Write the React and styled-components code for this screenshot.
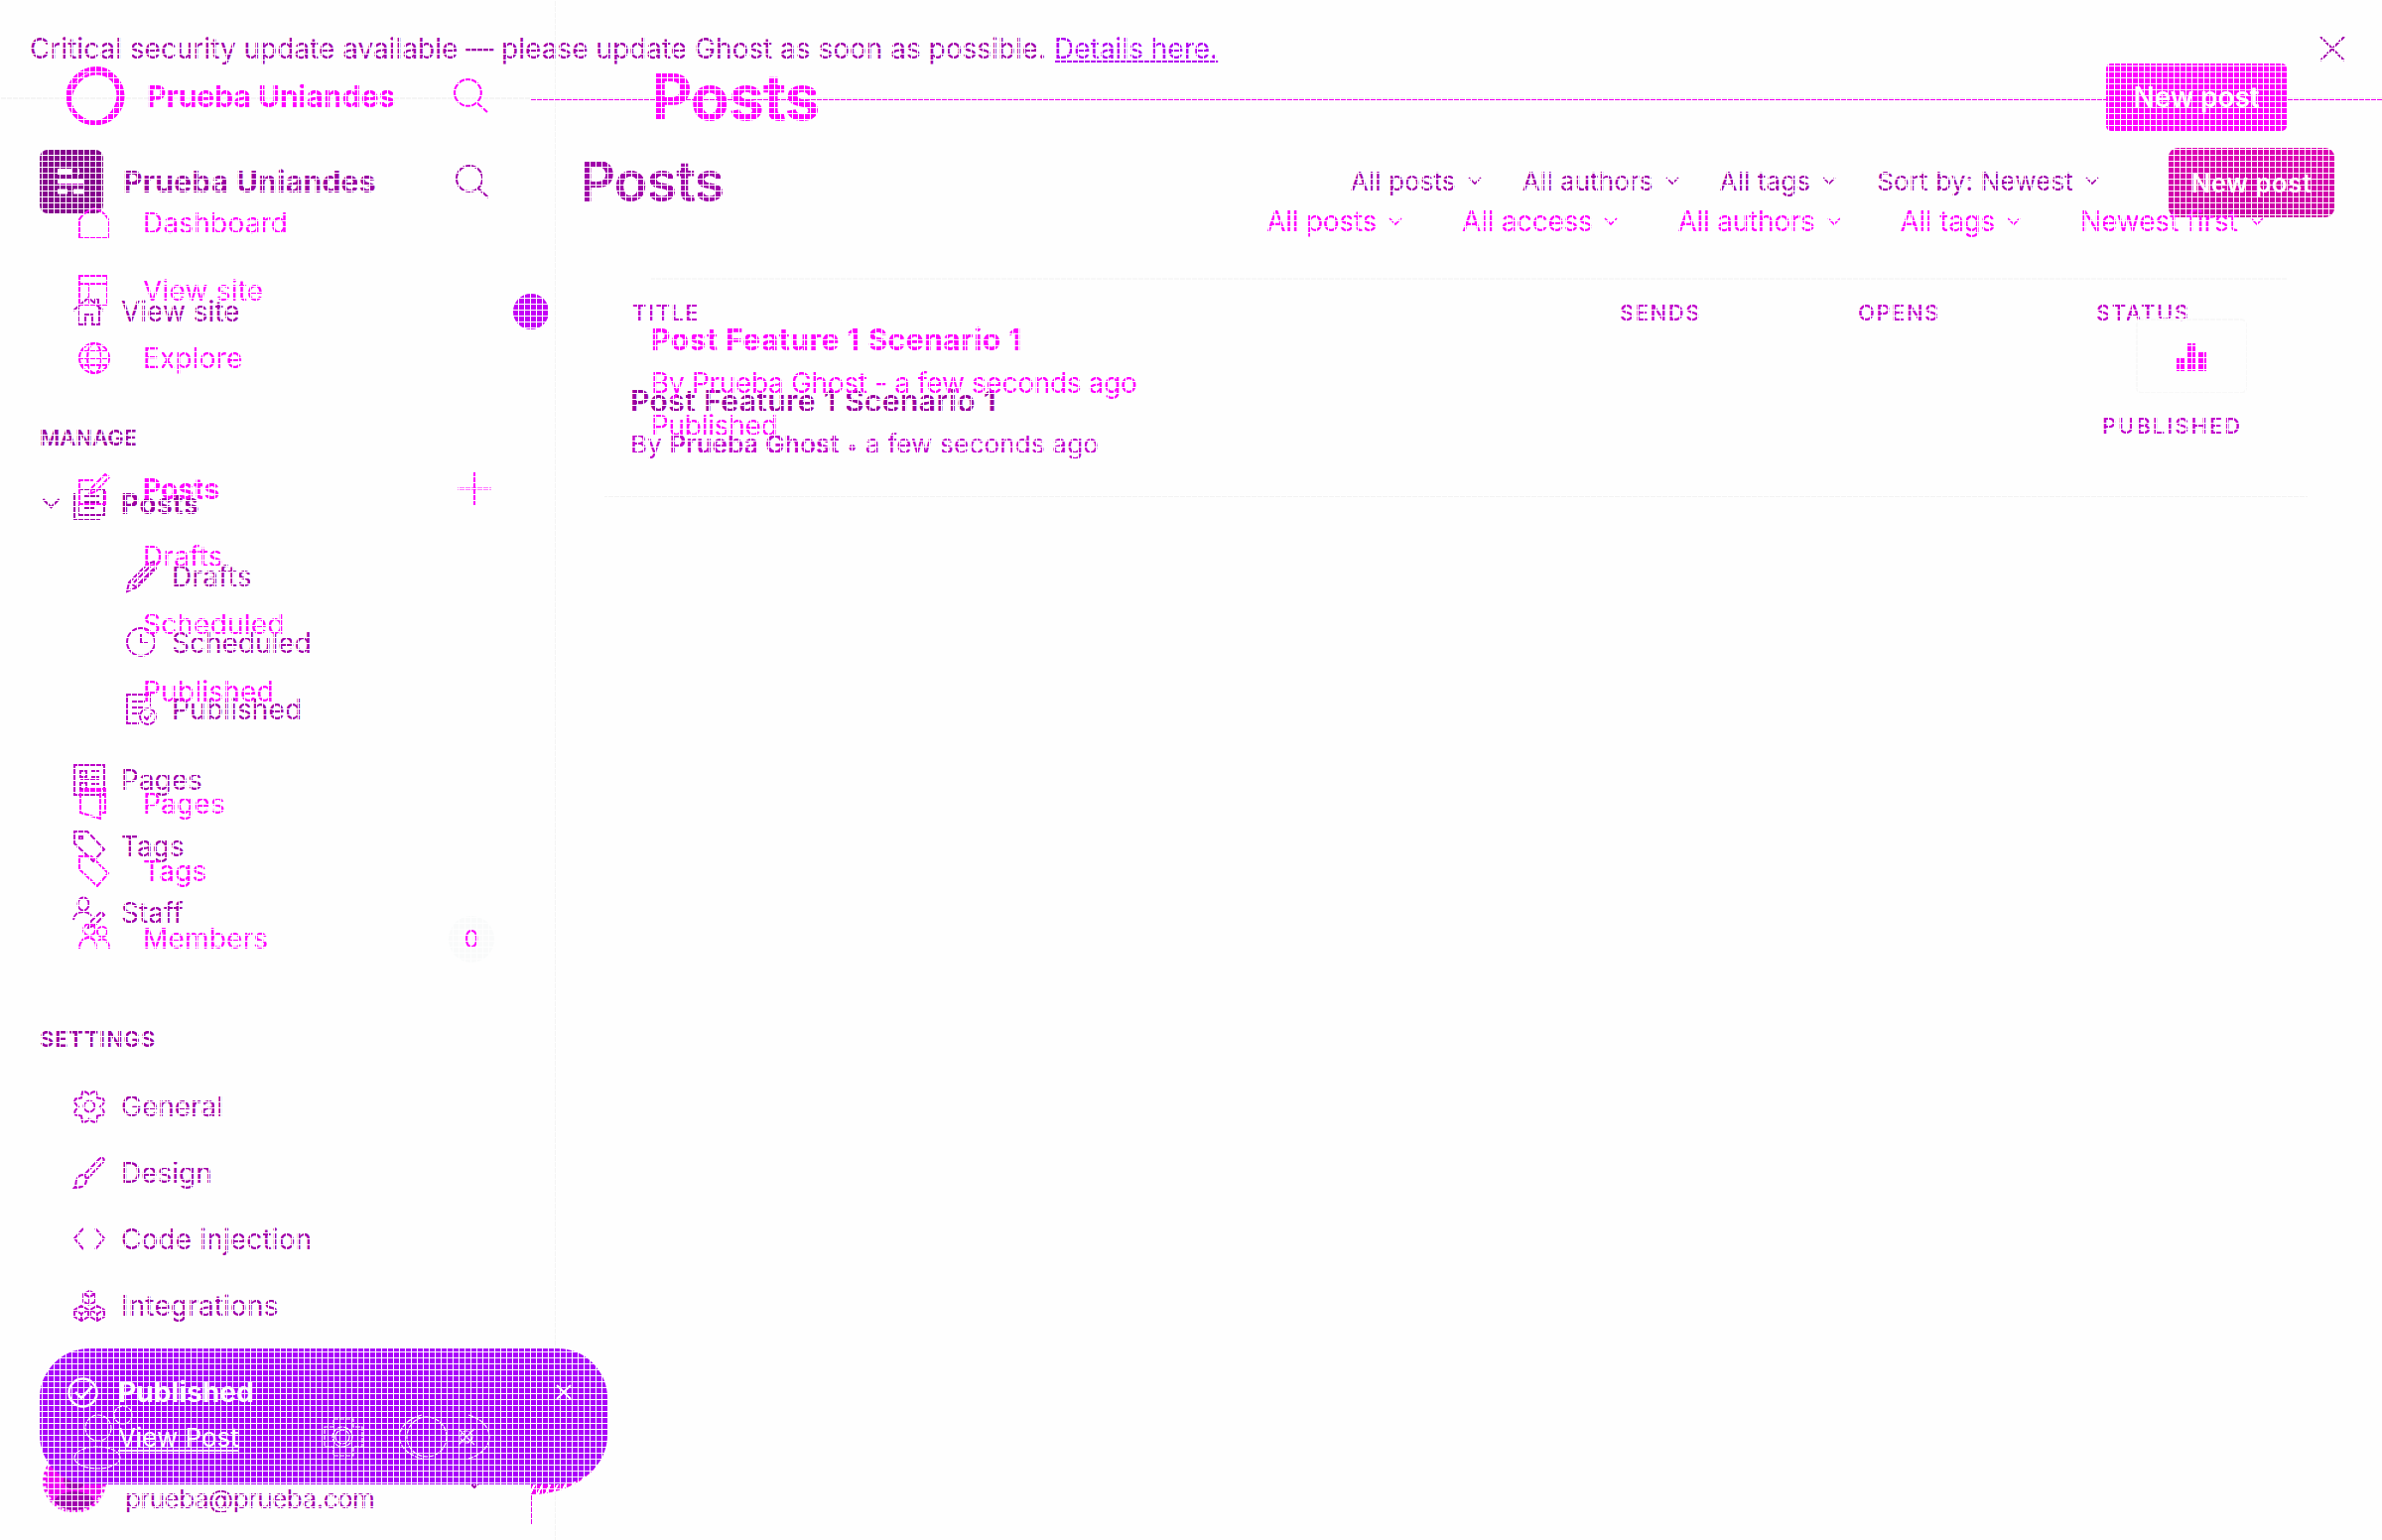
import React from "react";
import styled, { createGlobalStyle } from "styled-components";

const MAGENTA = "#ff00ff";
const PURPLE = "#a000aa";
const DEEP = "#9a00a2";
const ORCHID = "#c000cc";

const Global = createGlobalStyle`
  *{box-sizing:border-box}
  body{margin:0;background:#fefefe;font-family:Inter,"Liberation Sans",sans-serif}
  h1,h2,h3,p{margin:0}
`;

const Page = styled.div`
  display:grid;
  grid-template:1552px / 2400px;
  width:2400px;height:1552px;
  overflow:hidden;
  white-space:nowrap;
`;
const Layer = styled.div`
  grid-area:1 / 1;
  display:flex;
  flex-direction:${p => (p.$column ? "column" : "row")};
  min-width:0;min-height:0;
  color:${p => p.$color};
`;
const GridMask = styled.div`
  grid-area:1 / 1;
  z-index:5;
  pointer-events:none;
  background-image:linear-gradient(to right,#fefefe 1px,transparent 1px),linear-gradient(#fefefe 1px,transparent 1px);
  background-size:6px 6px;
`;
const Text = styled.span`
  font-size:${p => p.$size || 28}px;
  font-weight:${p => p.$weight || 400};
  letter-spacing:${p => p.$track || 0}px;
  line-height:${p => p.$line || 34}px;
  color:${p => p.$color || "inherit"};
`;
const Svg = styled.svg`
  display:block;flex:none;overflow:visible;
  width:${p => p.$w || 32}px;height:${p => p.$h || p.$w || 32}px;
  fill:none;stroke:currentColor;stroke-width:${p => p.$stroke || 2};
`;

/* Banner */
const Banner = styled.header`
  display:flex;align-items:center;justify-content:space-between;
  height:100px;flex:none;padding:0 38px 0 30px;
  border-bottom:2px solid #f5f5f5;
`;
const DetailsLink = styled.a`
  color:#b000f0;text-decoration:underline;text-decoration-thickness:2px;text-underline-offset:2px;
`;
const Body = styled.div`display:flex;flex:1;min-height:0;`;

/* Sidebar */
const SideNav = styled.nav`
  width:560px;flex:none;display:flex;flex-direction:column;
`;
const SideEdge = styled.div`
  grid-area:1 / 1;width:560px;border-right:1px solid #f4f4f4;
`;
const Brand = styled.div`
  display:flex;align-items:center;
  height:${p => p.$h}px;flex:none;
  padding:${p => p.$pad};
  margin-bottom:${p => p.$after || 0}px;
  gap:${p => p.$gap}px;
  > svg:last-child{margin-left:auto}
`;
const LogoTile = styled.div`
  width:64px;height:64px;border-radius:8px;background:#86008e;flex:none;
  display:grid;place-items:center;
`;
const SectionTitle = styled.h3`
  display:flex;align-items:center;
  height:${p => p.$h}px;margin-top:${p => p.$top}px;padding-left:40px;flex:none;
  font-size:22px;font-weight:600;letter-spacing:${p => p.$track}px;color:${DEEP};
`;
const NavRow = styled.div`
  display:flex;align-items:center;
  height:${p => p.$h || 67}px;flex:none;
  margin-top:${p => p.$top || 0}px;
  padding-left:${p => p.$left}px;
  padding-right:${p => p.$right || 0}px;
`;
const IconSlot = styled.span`
  width:${p => p.$w}px;flex:none;color:${p => p.$color || "inherit"};
`;
const RowEnd = styled.span`margin-left:auto;display:flex;`;
const Dot = styled.span`
  width:36px;height:36px;border-radius:50%;background:#c400f6;
`;
const CountBadge = styled.span`
  width:46px;height:47px;border-radius:50%;background:#f9fafa;
  display:grid;place-items:center;font-size:24px;
`;
const UserRow = styled.div`
  display:flex;align-items:flex-end;height:64px;margin-top:112px;padding:0 76px 0 43px;gap:19px;flex:none;
`;
const Email = styled.span`
  font-size:26px;letter-spacing:-.5px;line-height:30px;margin-bottom:-1px;
`;
const Avatar = styled.div`
  width:64px;height:64px;flex:none;border-radius:50%;overflow:hidden;
  background:#f000f4;border:3px dotted #f3e8f3;color:#a000ae;
`;
const UserChevron = styled(Svg)`margin:0 0 25px auto;`;

/* Main area */
const Main = styled.main`flex:1;display:flex;flex-direction:column;min-width:0;`;
const Toolbar = styled.div`
  display:flex;align-items:center;flex:none;
  height:${p => p.$h}px;padding:${p => p.$pad};
`;
const PageTitle = styled.h1`
  font-size:${p => p.$size}px;font-weight:${p => p.$weight};letter-spacing:-1.1px;line-height:1;
  margin-right:auto;
`;
const Filters = styled.div`display:flex;align-items:center;gap:${p => p.$gap}px;`;
const FilterItem = styled.div`display:flex;align-items:center;gap:13px;`;
const NewPost = styled.button`
  border:0;font-family:inherit;color:#fefefe;padding:0;flex:none;
  width:${p => p.$w}px;height:${p => p.$h}px;border-radius:${p => p.$radius}px;
  margin:${p => p.$margin || 0};
  background:${p => p.$bg};
  font-size:${p => p.$size}px;font-weight:${p => p.$weight};letter-spacing:${p => p.$track || 0}px;
`;
const Table = styled.section`width:1716px;margin-left:49px;`;
const TableRow = styled.div`
  display:grid;grid-template-columns:1000px 240px 240px 236px;align-items:center;
  height:${p => p.$h}px;
  padding-bottom:${p => p.$bottom || 0}px;
  border-bottom:${p => (p.$ruled ? "1px solid #f2f2f2" : "0")};
  color:${ORCHID};
`;
const Cell = styled.div`
  display:flex;flex-direction:column;
  padding-left:${p => p.$left}px;padding-bottom:${p => p.$bottom || 0}px;
`;
const FilterBar = styled.div`
  display:flex;justify-content:flex-end;align-items:center;flex:none;
  height:86px;padding:0 24px 30px 0;border-bottom:2px solid #f7f7f7;
`;
const PostEntry = styled.article`
  display:flex;justify-content:space-between;padding:38px 40px 0 0;
`;
const EntryText = styled.div`display:flex;flex-direction:column;padding-top:1px;`;
const StatsBox = styled.div`
  width:112px;height:76px;margin-top:1px;border:2px solid #f8f8f8;border-radius:6px;
  display:grid;place-items:center;
`;
const Content = styled(Main)`padding:0 96px;`;

/* Frame outline behind the layers */
const FrameTop = styled.div`
  grid-area:1 / 1;height:1px;background:#f400f4;margin:100px 0 0 535px;
`;
const FrameSide = styled.div`
  grid-area:1 / 1;width:1px;height:29px;background:#e000e8;margin:1507px 0 0 535px;
`;

/* Toast */
const ToastShadow = styled.div`
  grid-area:1 / 1;z-index:2;margin:1440px 0 0 535px;width:76px;height:66px;
  border-radius:0 0 76px 0 / 0 0 56px 0;
  background:repeating-linear-gradient(115deg,#f000f0 0 5px,#fefefe 5px 7px);
`;
const Toast = styled.aside`
  grid-area:1 / 1;z-index:3;margin:1359px 0 0 40px;
  width:572px;height:137px;border-radius:50px;
  background:#aa00fa;color:#fefefe;
  display:grid;grid-template:137px / 572px;
`;
const ToastBody = styled.div`
  grid-area:1 / 1;display:grid;grid-template-columns:51px 1fr 18px;
  grid-template-rows:34px 32px;row-gap:13px;align-content:start;align-items:center;
  padding:27px 34px 0 28px;
`;
const ViewPost = styled.a`
  grid-column:2;justify-self:start;font-size:26px;line-height:32px;
  text-decoration:underline;text-decoration-thickness:2px;text-underline-offset:3px;
`;
const Ghosted = styled(Svg)`grid-area:1 / 1;`;

const paths = {
  home: <path d="M0 15 15 2l15 13M5 12v17h7V19h7v10h7V12M22 8V3h3v8" />,
  posts: <path d="M5 1h26v26H5zM10 8h16M10 14h16M10 20h11M1 5v26h26" />,
  pencil: <path d="M1 31l2-9L22 3l6-2 2 7-19 19zM3 22l8 5M8 22 25 5M11 25 28 8" />,
  clock: <><circle cx="15" cy="15" r="14" /><path d="M15 7v9h7" /></>,
  published: <><path d="M13 30H1V1h23v12M5 8h14M5 14h12M5 20h8" /><circle cx="22" cy="23" r="8" /><path d="m18 23 3 3 5-6" /></>,
  pages: <path d="M1 1h30v30H1zM7 7h6v6H7zM7 19h6v6H7zM18 7h8M18 13h8M7 16h19M18 20h8M18 25h8" />,
  tag: <><path d="M1 1h13l17 18-11 12L1 13z" /><path d="M6 6h3v3H6z" /></>,
  staff: <><ellipse cx="10" cy="7" rx="5.500" ry="6.500" /><path d="M0 23c1-6 4-8 10-8 4 0 6 1 8 4M15 31l3-7 10-9 3 3-9 10z" /></>,
  gear: <><circle cx="16" cy="16" r="5.500" /><path d="M16 4.500c2-3 4-4 7-3l1 6 6 1c2 3 0 5-3 8 3 3 5 5 3 8l-6 1-1 6c-3 1-5 0-7-3-2 3-4 4-7 3l-1-6-6-1c-2-3 0-5 3-8-3-3-5-5-3-8l6-1 1-6c3-1 5 0 7 3z" /></>,
  brush: <path d="M1 31c3-3 0-6 3-10 4-5 9-3 9 2 0 6-6 8-12 8zM10 19 26 2c3-3 6 0 4 3L14 22" />,
  code: <path d="M10 5 1 15l9 11M22 5l9 10-9 11" />,
  cubes: <path d="M16 1l6 3v8l-6 3-6-3V4zM10 4l6 3 6-3M16 7v8M8 16l7 4v7l-7 4-7-4v-7zM1 20l7 4 7-4M8 24v7M24 16l7 4v7l-7 4-7-4v-7zM17 20l7 4 7-4M24 24v7" />,
  dash: <path d="M1 31V12C4 7 11 2 16 1c5 1 12 6 14 11v19z" />,
  layout: <path d="M1 1h28v29H1zM1 9h28M11 9v21" />,
  globe: <><circle cx="16" cy="16" r="15" /><ellipse cx="16" cy="16" rx="7" ry="15" /><path d="M1 16h30M3 9h26M3 23h26" /></>,
  compose: <path d="M15 7H1v24h26V18M11 21l3-7L27 1l4 3-13 14z" />,
  book: <path d="M2 3h20v28L2 25zM6 1h21v24h-5" />,
  label: <path d="M1 1h12l17 17-11 13L1 14z" />,
  members: <><circle cx="11" cy="7" r="6" /><circle cx="24" cy="9" r="5" /><path d="M1 26c0-7 4-11 9-11s8 4 8 11M20 18c6-4 11 1 11 8" /></>,
  search: <><circle cx="14" cy="14" r="13" /><path d="m23 24 10 9" /></>,
  plus: <path d="M17 0v33M0 16.500h34" />,
  close: <path d="m0 0 24 24M24 0 0 24" />,
  chevron: <path d="m0 0 6 6 6-6" />,
};
const Icon = ({ name, w = 32, h, box, stroke }) => (
  <Svg $w={w} $h={h} $stroke={stroke} viewBox={box || "0 0 32 32"}>{paths[name]}</Svg>
);
const Arrow = ({ w = 12 }) => <Icon name="chevron" w={w} h={w / 2 + 1} box="0 0 12 7" stroke={1.6} />;

const Item = ({ icon, label, top, nested, track }) => (
  <NavRow $left={nested ? 127 : 74} $top={top}>
    <IconSlot $w={nested ? 46 : 48} $color="#bc00c8"><Icon name={icon} /></IconSlot>
    <Text $track={track}>{label}</Text>
  </NavRow>
);
const BrightItem = ({ icon, label, top, bold, right, children }) => (
  <NavRow $h={68} $left={79} $top={top} $right={right}>
    <IconSlot $w={65}>{icon && <Icon name={icon} />}</IconSlot>
    <Text $track={0.2} $weight={bold ? 700 : 400}>{label}</Text>
    {children && <RowEnd>{children}</RowEnd>}
  </NavRow>
);
const Filter = ({ label, size, track }) => (
  <FilterItem><Text $size={size} $track={track}>{label}</Text><Arrow /></FilterItem>
);

export default function App() {
  return (
    <Page>
      <Global />
      <SideEdge />
      <Layer $column $color={PURPLE}>
        <Banner>
          <Text>
            Critical security update available — please update Ghost as soon as possible.{" "}
            <DetailsLink>Details here.</DetailsLink>
          </Text>
          <Icon name="close" w={24} box="0 0 24 24" />
        </Banner>
        <Body>
          <SideNav>
            <Brand $h={165} $pad="0 67px 0 40px" $gap={20} $after={15}>
              <LogoTile>
                <Svg $w={28} viewBox="0 0 28 28">
                  <path d="M0 4h15M20 4h2" stroke="#fefefe" strokeWidth="6" />
                  <path d="M0 14h27" stroke="#fefefe" strokeWidth="4" />
                  <path d="M0 17h27" stroke="#d400dc" strokeWidth="1.500" />
                  <path d="M0 24h10M16 24h11" stroke="#fefefe" strokeWidth="5" />
                </Svg>
              </LogoTile>
              <Text $size={30} $weight={700} $track={0.3} $color={DEEP}>Prueba Uniandes</Text>
              <Icon name="search" w={34} box="0 0 34 34" />
            </Brand>
            <NavRow $left={74} $right={7}>
              <IconSlot $w={48} $color="#b000bc"><Icon name="home" /></IconSlot>
              <Text>View site</Text>
              <RowEnd><Dot /></RowEnd>
            </NavRow>
            <SectionTitle $h={80} $top={54} $track={0}>MANAGE</SectionTitle>
            <NavRow $h={54} $left={43}>
              <IconSlot $w={31}><Arrow w={17} /></IconSlot>
              <IconSlot $w={48}><Icon name="posts" /></IconSlot>
              <Text $weight={700} $track={0.5} $color={DEEP}>Posts</Text>
            </NavRow>
            <Item nested icon="pencil" label="Drafts" top={12} track={0.2} />
            <Item nested icon="clock" label="Scheduled" />
            <Item nested icon="published" label="Published" track={0.15} />
            <Item icon="pages" label="Pages" top={4} />
            <Item icon="tag" label="Tags" />
            <Item icon="staff" label="Staff" />
            <SectionTitle $h={68} $top={60} $track={0.85}>SETTINGS</SectionTitle>
            <Item icon="gear" label="General" />
            <Item icon="brush" label="Design" />
            <Item icon="code" label="Code injection" track={0.15} />
            <Item icon="cubes" label="Integrations" track={0.15} />
            <UserRow>
              <Avatar>
                <Svg $w={58} viewBox="0 0 58 58">
                  <ellipse cx="29" cy="28" rx="11" ry="9" fill="currentColor" stroke="none" />
                  <ellipse cx="29" cy="52" rx="21" ry="13" fill="currentColor" stroke="none" />
                </Svg>
              </Avatar>
              <Email>prueba@prueba.com</Email>
              <UserChevron $w={12} $h={7} viewBox="0 0 12 7">{paths.chevron}</UserChevron>
            </UserRow>
          </SideNav>
          <Main>
            <Toolbar $h={165} $pad="0 48px 0 24px">
              <PageTitle $size={56} $weight={600}>Posts</PageTitle>
              <Filters $gap={42}>
                <Filter size={26} track={0.1} label="All posts" />
                <Filter size={26} track={0.1} label="All authors" />
                <Filter size={26} track={0.1} label="All tags" />
                <Filter size={26} track={0.15} label="Sort by: Newest" />
              </Filters>
              <NewPost $w={167} $h={70} $radius={9} $margin="3px 0 0 71px" $size={26} $weight={600} $track={0.35}
                $bg="linear-gradient(#de00b6,#cc00a6)">New post</NewPost>
            </Toolbar>
            <Table>
              <TableRow $h={100}>
                {["TITLE", "SENDS", "OPENS", "STATUS"].map((t, i) => (
                  <Cell key={t} $left={i ? 23 : 28}>
                    <Text $size={22} $weight={500} $track={1.55}>{t}</Text>
                  </Cell>
                ))}
              </TableRow>
              <TableRow $h={136} $bottom={8} $ruled>
                <Cell $left={26} $bottom={3}>
                  <Text $size={30} $weight={600} $track={0.42} $line={44} $color={DEEP}>Post Feature 1 Scenario 1</Text>
                  <Text $size={26} $track={0.2} $line={44}>
                    By <Text $size={26} $weight={600} $line={44}>Prueba Ghost</Text> <Text $size={20} $line={44}>•</Text> a few seconds ago
                  </Text>
                </Cell>
                <span />
                <span />
                <Cell $left={29}>
                  <Text $size={22} $weight={500} $track={2}>PUBLISHED</Text>
                </Cell>
              </TableRow>
            </Table>
          </Main>
        </Body>
      </Layer>

      <FrameTop />
      <FrameSide />

      <Layer $color={MAGENTA}>
        <SideNav>
          <Brand $h={191} $pad="2px 68px 0 66px" $gap={22}>
            <Svg $w={60} viewBox="0 0 60 60" $stroke={5}>
              <ellipse cx="30" cy="30" rx="27" ry="27" />
              <ellipse cx="29" cy="32" rx="23" ry="26" transform="rotate(35 29 32)" strokeWidth="3" />
              <path d="M12 9C21-1 40-2 48 9" strokeWidth="2" />
            </Svg>
            <Text $size={30} $weight={700}>Prueba Uniandes</Text>
            <Icon name="search" w={35} box="0 0 34 34" />
          </Brand>
          <BrightItem icon="dash" label="Dashboard" />
          <BrightItem icon="layout" label="View site" />
          <BrightItem icon="globe" label="Explore" />
          <BrightItem icon="compose" label="Posts" bold top={64} right={65}>
            <Icon name="plus" w={34} box="0 0 34 34" />
          </BrightItem>
          <BrightItem label="Drafts" />
          <BrightItem label="Scheduled" />
          <BrightItem label="Published" />
          <BrightItem icon="book" label="Pages" top={45} />
          <BrightItem icon="label" label="Tags" />
          <BrightItem icon="members" label="Members" right={62}>
            <CountBadge>0</CountBadge>
          </BrightItem>
        </SideNav>
        <Content>
          <Toolbar $h={196} $pad="0">
            <PageTitle $size={64} $weight={700}>Posts</PageTitle>
            <NewPost $w={182} $h={68} $radius={5} $size={28} $weight={600} $track={-0.1} $bg={MAGENTA}>New post</NewPost>
          </Toolbar>
          <FilterBar>
            <Filters $gap={61}>
              <Filter track={-0.25} label="All posts" />
              <Filter track={-0.3} label="All access" />
              <Filter track={-0.25} label="All authors" />
              <Filter track={-0.3} label="All tags" />
              <Filter label="Newest first" />
            </Filters>
          </FilterBar>
          <PostEntry>
            <EntryText>
              <Text $size={30} $weight={700} $track={0.5} $line={43}>Post Feature 1 Scenario 1</Text>
              <Text $track={-0.32} $line={44}>By Prueba Ghost - a few seconds ago</Text>
              <Text $track={-0.3} $line={43}>Published</Text>
            </EntryText>
            <StatsBox>
              <Svg $w={30} $h={27} viewBox="0 0 30 27" $stroke={4}>
                <path d="M2 26V17h4v9zM13 26V2h4v24zM24 26V11h4v15z" />
              </Svg>
            </StatsBox>
          </PostEntry>
        </Content>
      </Layer>

      <ToastShadow />
      <Toast>
        <Ghosted $w={572} $h={137} $stroke={1.2} viewBox="0 0 572 137" strokeDasharray="5 1">
          <circle cx="59" cy="80" r="13" />
          <circle cx="84" cy="67" r="9" />
          <ellipse cx="58" cy="110" rx="23" ry="11" />
          <circle cx="305" cy="89" r="7" />
          <circle cx="305" cy="89" r="10" />
          <path d="M296 71h20v8h9v20h-9v9h-20v-9h-9V79h9z" />
          <circle cx="390" cy="89" r="20" />
          <path d="M385 67c-30 8-30 36 0 44M432 67c28 8 28 36 0 44" />
          <circle cx="430" cy="89" r="6" />
          <path d="m422 81 16 16M438 81l-16 16" />
        </Ghosted>
        <ToastBody>
          <Svg $w={31} viewBox="0 0 31 31" $stroke={2.6}>
            <circle cx="15.5" cy="15.500" r="14" />
            <path d="m8 15 6 6L25 9" />
          </Svg>
          <Text $weight={700} $track={0.1}>Published</Text>
          <Svg $w={16} viewBox="0 0 16 16" $stroke={2}><path d="m1 1 14 14M15 1 1 15" /></Svg>
          <ViewPost>View Post</ViewPost>
        </ToastBody>
      </Toast>
      <GridMask />
    </Page>
  );
}
